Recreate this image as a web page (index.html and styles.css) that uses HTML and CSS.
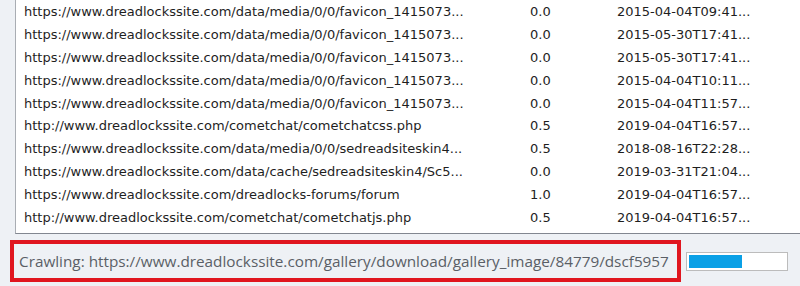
FILE: index.html
```html
<!DOCTYPE html>
<html lang="en">
<head>
    <meta charset="UTF-8">
    <title>Crawler</title>
    <link rel="stylesheet" href="styles.css">
</head>
<body>
    <div class="list">
        <div class="row"><span class="url">https://www.dreadlockssite.com/data/media/0/0/favicon_1415073...</span><span class="prio">0.0</span><span class="date">2015-04-04T09:41...</span></div>
        <div class="row"><span class="url">https://www.dreadlockssite.com/data/media/0/0/favicon_1415073...</span><span class="prio">0.0</span><span class="date">2015-05-30T17:41...</span></div>
        <div class="row"><span class="url">https://www.dreadlockssite.com/data/media/0/0/favicon_1415073...</span><span class="prio">0.0</span><span class="date">2015-05-30T17:41...</span></div>
        <div class="row"><span class="url">https://www.dreadlockssite.com/data/media/0/0/favicon_1415073...</span><span class="prio">0.0</span><span class="date">2015-04-04T10:11...</span></div>
        <div class="row"><span class="url">https://www.dreadlockssite.com/data/media/0/0/favicon_1415073...</span><span class="prio">0.0</span><span class="date">2015-04-04T11:57...</span></div>
        <div class="row"><span class="url">http://www.dreadlockssite.com/cometchat/cometchatcss.php</span><span class="prio">0.5</span><span class="date">2019-04-04T16:57...</span></div>
        <div class="row"><span class="url">https://www.dreadlockssite.com/data/media/0/0/sedreadsiteskin4...</span><span class="prio">0.5</span><span class="date">2018-08-16T22:28...</span></div>
        <div class="row"><span class="url">https://www.dreadlockssite.com/data/cache/sedreadsiteskin4/Sc5...</span><span class="prio">0.0</span><span class="date">2019-03-31T21:04...</span></div>
        <div class="row"><span class="url">https://www.dreadlockssite.com/dreadlocks-forums/forum</span><span class="prio">1.0</span><span class="date">2019-04-04T16:57...</span></div>
        <div class="row"><span class="url">http://www.dreadlockssite.com/cometchat/cometchatjs.php</span><span class="prio">0.5</span><span class="date">2019-04-04T16:57...</span></div>
    </div>
    <div class="status">
        <div class="status-text">Crawling: https://www.dreadlockssite.com/gallery/download/gallery_image/84779/dscf5957</div>
        <div class="progress"><div class="progress-fill" style="width: 55%"></div></div>
    </div>
</body>
</html>
```

FILE: styles.css
```css
body {
    margin: 0;
    width: 800px;
    height: 286px;
    overflow: hidden;
    background-color: #eef1f5;
}
.list {
    margin-left: 15px;
    width: 800px;
    height: 233px;
    background-color: #fff;
    border-left: 1px solid #a9adb3;
    border-bottom: 1px solid #828790;
    overflow: hidden;
    font-family: "DejaVu Sans", Verdana, sans-serif;
    font-size: 13px;
    color: #1e1e1e;
}
.row {
    display: flex;
    align-items: center;
    height: 22.9px;
}
.url {
    width: 506px;
    padding-left: 8px;
    white-space: nowrap;
    flex-shrink: 0;
}
.prio {
    width: 87px;
    flex-shrink: 0;
}
.date {
    white-space: nowrap;
}
.status {
    display: flex;
    align-items: center;
    gap: 5px;
    padding: 6px 0 0 10px;
}
.status-text {
    width: 658px;
    height: 34px;
    line-height: 34px;
    padding-left: 5px;
    border: 4px solid #e0161f;
    font-family: "Open Sans", "Noto Sans", sans-serif;
    font-size: 15.3px;
    color: #5a5f66;
    white-space: nowrap;
}
.progress {
    width: 96px;
    height: 13px;
    border: 1px solid #bcbcbc;
    background-color: #fff;
    padding: 2px;
}
.progress-fill {
    height: 100%;
    background-color: #0aa0e6;
}
```
